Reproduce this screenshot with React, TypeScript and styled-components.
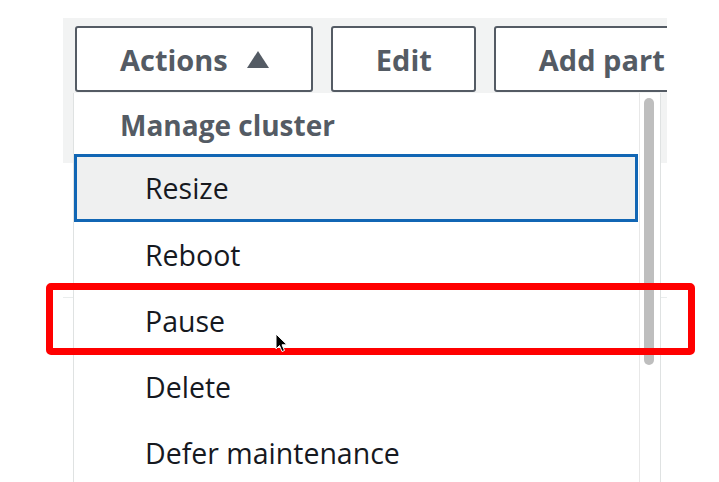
import React from 'react';
import styled, { createGlobalStyle } from 'styled-components';

const GlobalStyle = createGlobalStyle`
  html, body {
    margin: 0;
    padding: 0;
    background: #ffffff;
  }
  body {
    font-family: "Open Sans", "Liberation Sans", sans-serif;
    overflow: hidden;
  }
  * {
    box-sizing: border-box;
  }
`;

const Screen = styled.div`
  position: relative;
  width: 719px;
  height: 482px;
  overflow: hidden;
  padding: 18px 0 0 63px;
`;

const Panel = styled.div`
  position: relative;
  width: 604px;
  height: 464px;
  overflow: hidden;
  display: flex;
  flex-direction: column;
`;

const PanelHeader = styled.div`
  height: 145px;
  background: #f2f3f3;
  padding: 8px 0 0 12px;
`;

const Toolbar = styled.div`
  display: flex;
  gap: 18px;
`;

const Button = styled.button`
  flex-shrink: 0;
  height: 66px;
  display: flex;
  align-items: center;
  gap: 19px;
  padding: 0 42px 0 43px;
  background: #ffffff;
  border: 2px solid #545b64;
  border-radius: 3px;
  color: #545b64;
  font-family: "Open Sans", "Liberation Sans", sans-serif;
  font-size: 29px;
  font-weight: 700;
  white-space: nowrap;
`;

const Caret = styled.svg`
  width: 22px;
  height: 17px;
  flex-shrink: 0;
`;

const TableRow = styled.div`
  height: 135px;
  border-bottom: 1px solid #eaeded;
`;

const Dropdown = styled.div`
  position: absolute;
  top: 75px;
  left: 10px;
  width: 588px;
  height: 400px;
  display: flex;
  background: #ffffff;
  border-left: 1px solid #dfe2e2;
  border-right: 1px solid #dfe2e2;
`;

const MenuList = styled.ul`
  flex: 1;
  margin: 0;
  padding: 0;
  list-style: none;
`;

const GroupHeading = styled.li`
  height: 61px;
  display: flex;
  align-items: center;
  padding: 2px 0 0 46px;
  color: #545b64;
  font-size: 28px;
  font-weight: 700;
`;

const MenuItem = styled.li<{ $focused?: boolean }>`
  height: ${({ $focused }) => ($focused ? '68px' : '66px')};
  display: flex;
  align-items: center;
  padding-left: ${({ $focused }) => ($focused ? '68px' : '71px')};
  color: #16191f;
  font-size: 28.5px;
  font-weight: 400;
  background: ${({ $focused }) => ($focused ? '#eff0f0' : 'transparent')};
  border: ${({ $focused }) => ($focused ? '3px solid #1166b4' : 'none')};
  margin-right: 1px;
`;

const ScrollTrack = styled.div`
  width: 21px;
  flex-shrink: 0;
  border-left: 1px solid #e8e8e8;
  padding: 5px 0 0 4px;
`;

const ScrollThumb = styled.div`
  width: 10px;
  height: 267px;
  border-radius: 5px;
  background: #bebebe;
`;

const Annotation = styled.div`
  position: absolute;
  left: 46px;
  top: 283px;
  width: 649px;
  height: 72px;
  border: 7px solid #ff0000;
  border-radius: 5px;
  pointer-events: none;
`;

const Cursor = styled.svg`
  position: absolute;
  left: 275px;
  top: 333px;
  width: 13px;
  height: 20px;
`;

const items = ['Reboot', 'Pause', 'Delete', 'Defer maintenance'];

const App: React.FC = () => {
  return (
    <>
      <GlobalStyle />
      <Screen>
        <Panel>
          <PanelHeader>
            <Toolbar>
              <Button>
                Actions
                <Caret viewBox="0 0 22 17">
                  <polygon points="11,0 22,17 0,17" fill="#545b64" />
                </Caret>
              </Button>
              <Button>Edit</Button>
              <Button>Add part</Button>
            </Toolbar>
          </PanelHeader>
          <TableRow />

          <Dropdown>
            <MenuList>
              <GroupHeading>Manage cluster</GroupHeading>
              <MenuItem $focused>Resize</MenuItem>
              {items.map((item) => (
                <MenuItem key={item}>{item}</MenuItem>
              ))}
            </MenuList>
            <ScrollTrack>
              <ScrollThumb />
            </ScrollTrack>
          </Dropdown>
        </Panel>

        <Annotation />
        <Cursor viewBox="0 0 13 20">
          <path
            d="M1 1 L1 16 L4.5 12.5 L7 18.5 L9.5 17.5 L7 11.8 L12 11.8 Z"
            fill="#000000"
            stroke="#ffffff"
            strokeWidth="1"
            strokeLinejoin="round"
          />
        </Cursor>
      </Screen>
    </>
  );
};

export default App;
